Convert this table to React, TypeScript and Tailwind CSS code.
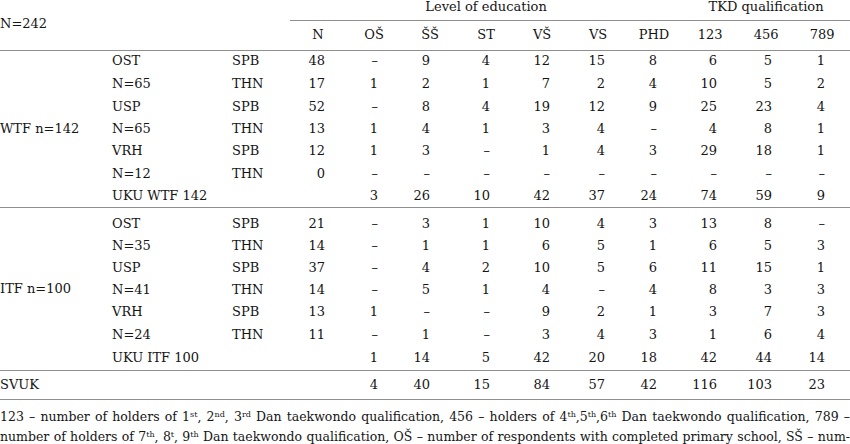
import React from 'react'

type Row = { sub?: string; grp?: string; vals: string[] }

const wtf: Row[] = [
  { sub: 'OST', grp: 'SPB', vals: ['48', '–', '9', '4', '12', '15', '8', '6', '5', '1'] },
  { sub: 'N=65', grp: 'THN', vals: ['17', '1', '2', '1', '7', '2', '4', '10', '5', '2'] },
  { sub: 'USP', grp: 'SPB', vals: ['52', '–', '8', '4', '19', '12', '9', '25', '23', '4'] },
  { sub: 'N=65', grp: 'THN', vals: ['13', '1', '4', '1', '3', '4', '–', '4', '8', '1'] },
  { sub: 'VRH', grp: 'SPB', vals: ['12', '1', '3', '–', '1', '4', '3', '29', '18', '1'] },
  { sub: 'N=12', grp: 'THN', vals: ['0', '–', '–', '–', '–', '–', '–', '–', '–', '–'] },
]

const itf: Row[] = [
  { sub: 'OST', grp: 'SPB', vals: ['21', '–', '3', '1', '10', '4', '3', '13', '8', '–'] },
  { sub: 'N=35', grp: 'THN', vals: ['14', '–', '1', '1', '6', '5', '1', '6', '5', '3'] },
  { sub: 'USP', grp: 'SPB', vals: ['37', '–', '4', '2', '10', '5', '6', '11', '15', '1'] },
  { sub: 'N=41', grp: 'THN', vals: ['14', '–', '5', '1', '4', '–', '4', '8', '3', '3'] },
  { sub: 'VRH', grp: 'SPB', vals: ['13', '1', '–', '–', '9', '2', '1', '3', '7', '3'] },
  { sub: 'N=24', grp: 'THN', vals: ['11', '–', '1', '–', '3', '4', '3', '1', '6', '4'] },
]

const headers = ['N', 'OŠ', 'ŠŠ', 'ST', 'VŠ', 'VS', 'PHD', '123', '456', '789']

// right padding per data column so digits line up like the print
const pads = ['pr-[21px]', 'pr-[24px]', 'pr-[28px]', 'pr-[24px]', 'pr-[20px]', 'pr-[21px]', 'pr-[25px]', 'pr-[21px]', 'pr-[22px]', 'pr-[25px]']

const wtfH = ['h-[22px]', 'h-[23px]', 'h-[23px]', 'h-[22px]', 'h-[22px]', 'h-[23px]']
const itfH = ['h-[27px]', 'h-[23px]', 'h-[22px]', 'h-[22px]', 'h-[22px]', 'h-[23px]']

function Nums({ vals, extra = '' }: { vals: string[]; extra?: string }) {
  return (
    <>
      {vals.map((v, i) => (
        <td key={i} className={`p-0 text-right align-middle ${pads[i]} ${extra}`}>
          {v}
        </td>
      ))}
    </>
  )
}

const line = 'border-b-[1.5px] border-[#8f8f8f]'

export default function App() {
  return (
    <div className="w-[850px] h-[444px] overflow-hidden bg-white text-[#151515] font-['DejaVu_Serif',serif] text-[13px] leading-[14px]">
      <table className="w-[850px] table-fixed border-collapse">
        <colgroup>
          <col className="w-[112px]" />
          <col className="w-[120px]" />
          <col className="w-[58px]" />
          {headers.map((h) => (
            <col key={h} className="w-[56px]" />
          ))}
        </colgroup>
        <tbody>
          {/* group headers */}
          <tr className="h-[20px]">
            <td rowSpan={2} colSpan={3} className={`p-0 pb-[2px] align-middle text-left ${line}`}>
              N=242
            </td>
            <td colSpan={7} className={`p-0 align-top text-center ${line}`}>
              Level of education
            </td>
            <td colSpan={3} className={`p-0 align-top text-center ${line}`}>
              TKD qualification
            </td>
          </tr>
          <tr className="h-[30px]">
            {headers.map((h) => (
              <td key={h} className={`p-0 text-center align-middle ${line}`}>
                {h}
              </td>
            ))}
          </tr>

          {/* WTF */}
          {wtf.map((r, i) => (
            <tr key={'w' + i} className={wtfH[i]}>
              {i === 0 && (
                <td rowSpan={7} className={`p-0 align-middle ${line}`}>
                  WTF n=142
                </td>
              )}
              <td className="p-0 align-middle">{r.sub}</td>
              <td className="p-0 align-middle">{r.grp}</td>
              <Nums vals={r.vals} />
            </tr>
          ))}
          <tr className={`h-[22px] ${line}`}>
            <td colSpan={2} className="p-0 align-middle">
              UKU WTF 142
            </td>
            <Nums vals={['', '3', '26', '10', '42', '37', '24', '74', '59', '9']} />
          </tr>

          {/* ITF */}
          {itf.map((r, i) => (
            <tr key={'i' + i} className={itfH[i]}>
              {i === 0 && (
                <td rowSpan={7} className={`p-0 align-middle ${line}`}>
                  ITF n=100
                </td>
              )}
              <td className={`p-0 align-middle ${i === 0 ? 'pt-[7px]' : ''}`}>{r.sub}</td>
              <td className={`p-0 align-middle ${i === 0 ? 'pt-[7px]' : ''}`}>{r.grp}</td>
              <Nums vals={r.vals} extra={i === 0 ? 'pt-[7px]' : ''} />
            </tr>
          ))}
          <tr className={`h-[24px] ${line}`}>
            <td colSpan={2} className="p-0 align-middle">
              UKU ITF 100
            </td>
            <Nums vals={['', '1', '14', '5', '42', '20', '18', '42', '44', '14']} />
          </tr>

          {/* total */}
          <tr className={`h-[29px] ${line}`}>
            <td colSpan={3} className="p-0 align-middle">
              SVUK
            </td>
            <Nums vals={['', '4', '40', '15', '84', '57', '42', '116', '103', '23']} />
          </tr>
        </tbody>
      </table>

      {/* footnote */}
      <div className="pt-[7px] leading-[20px] text-[12.5px]">
        <div className="text-justify [text-align-last:justify] whitespace-nowrap">
          123 – number of holders of 1<sup className="text-[8px]">st</sup>, 2<sup className="text-[8px]">nd</sup>, 3
          <sup className="text-[8px]">rd</sup> Dan taekwondo qualification, 456 – holders of 4
          <sup className="text-[8px]">th</sup>,5<sup className="text-[8px]">th</sup>,6<sup className="text-[8px]">th</sup> Dan
          taekwondo qualification, 789 –
        </div>
        <div className="text-justify [text-align-last:justify] whitespace-nowrap">
          number of holders of 7<sup className="text-[8px]">th</sup>, 8<sup className="text-[8px]">t</sup>, 9
          <sup className="text-[8px]">th</sup> Dan taekwondo qualification, OŠ – number of respondents with completed
          primary school, SŠ – num-
        </div>
      </div>
    </div>
  )
}
